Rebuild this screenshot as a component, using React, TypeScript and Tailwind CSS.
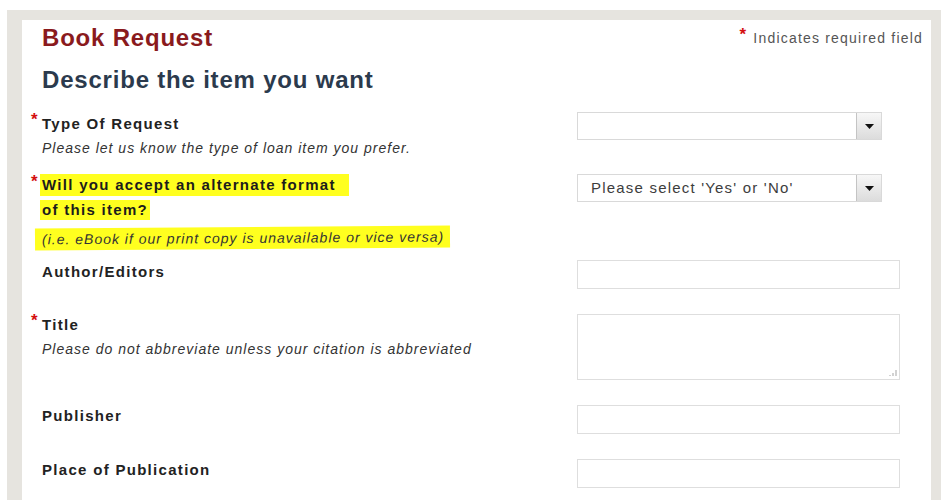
import type { ReactNode } from "react"

const sans = "font-['Liberation_Sans',Arial,sans-serif]"

function Req() {
    // red marker that sits just left of the label, raised like a superscript
    return (
        <span className="relative -top-[4px] -ml-[11px] mr-[3px] inline-block w-[8px] text-[17px] leading-none font-bold text-[#d40f0f]">
            *
        </span>
    )
}

function Label({ children, required }: { children: ReactNode; required?: boolean }) {
    return (
        <div className="text-[15px] leading-[20px] font-bold tracking-[1.3px] text-[#222]">
            {required && <Req />}
            {children}
        </div>
    )
}

function Hint({ children }: { children: ReactNode }) {
    return <div className="mt-[4px] text-[14px] leading-[20px] italic tracking-[1px] text-[#333]">{children}</div>
}

function Select({ value }: { value?: string }) {
    return (
        <div className="flex h-[28px] w-[305px] items-stretch border border-[#d9d9d9] bg-white">
            <div className="flex-1 pl-[13px] text-[15px] leading-[26px] tracking-[1.2px] text-[#3d3d3d]">{value}</div>
            <div className="flex w-[25px] items-center justify-center border-l border-[#c4c4c4] bg-gradient-to-b from-[#f7f7f7] to-[#dcdcdc]">
                <svg width="9" height="5" viewBox="0 0 9 5">
                    <path d="M0 0h9L4.5 5z" fill="#111" />
                </svg>
            </div>
        </div>
    )
}

function TextInput() {
    return <div className="h-[29px] w-[323px] border border-[#dedede] bg-white" />
}

function TextArea() {
    return (
        <div className="relative h-[66px] w-[323px] border border-[#dedede] bg-white">
            {/* resize grip */}
            <svg className="absolute right-[2px] bottom-[2px]" width="8" height="8" viewBox="0 0 8 8">
                <path d="M7 1v6M4 4v3M1 6v1" stroke="#b5b5b5" strokeWidth="1.2" />
            </svg>
        </div>
    )
}

function Row({ label, control, className }: { label: ReactNode; control: ReactNode; className?: string }) {
    return (
        <div className={`flex items-start ${className ?? ""}`}>
            <div className="w-[535px] shrink-0">{label}</div>
            <div>{control}</div>
        </div>
    )
}

export default function App() {
    return (
        <div className={`h-[500px] overflow-hidden bg-white pt-[10px] pl-[7px] ${sans}`}>
            <div className="flex h-full flex-col bg-[#e6e4df] pt-[10px] pr-[10px] pl-[15px]">
                <div className="flex-1 bg-white pt-[4px] pr-[8px] pl-[20px]">
                    {/* heading row */}
                    <div className="flex items-start justify-between">
                        <h1 className="text-[24px] leading-[28px] font-bold tracking-[0.8px] text-[#8a1a1d]">Book Request</h1>
                        <p className="mt-[4px] text-[14px] leading-[20px] tracking-[1.2px] text-[#555]">
                            <span className="relative -top-[3px] mr-[6px] text-[17px] font-bold text-[#d40f0f]">*</span>
                            Indicates required field
                        </p>
                    </div>
                    <h2 className="mt-[13px] text-[24px] leading-[30px] font-bold tracking-[0.8px] text-[#2b3a4d]">
                        Describe the item you want
                    </h2>

                    <Row
                        className="mt-[17px]"
                        label={
                            <div className="pt-[2px]">
                                <Label required>Type Of Request</Label>
                                <Hint>Please let us know the type of loan item you prefer.</Hint>
                            </div>
                        }
                        control={<Select />}
                    />

                    <Row
                        className="mt-[16px]"
                        label={
                            <div className="text-[15px] leading-[24px] font-bold tracking-[1.3px] text-[#1c1c1c]">
                                <div className="flex items-center">
                                    <Req />
                                    <span className="-ml-[2px] inline-block h-[22px] bg-[#ffff1f] pr-[13px] pl-[2px] leading-[22px]">
                                        Will you accept an alternate format
                                    </span>
                                </div>
                                <div className="mt-[2px]">
                                    <span className="-ml-[2px] inline-block h-[20px] bg-[#ffff1f] pr-[2px] pl-[2px] leading-[20px]">
                                        of this item?
                                    </span>
                                </div>
                                <div className="mt-[4px]">
                                    <span className="-ml-[7px] inline-block h-[22px] -rotate-[0.4deg] bg-[#ffff1f] pr-[6px] pl-[7px] text-[14px] leading-[22px] font-normal italic tracking-[1px] text-[#333]">
                                        (i.e. eBook if our print copy is unavailable or vice versa)
                                    </span>
                                </div>
                            </div>
                        }
                        control={<Select value="Please select 'Yes' or 'No'" />}
                    />

                    <Row
                        className="mt-[10px]"
                        label={
                            <div className="pt-[2px]">
                                <Label>Author/Editors</Label>
                            </div>
                        }
                        control={<TextInput />}
                    />

                    <Row
                        className="mt-[25px]"
                        label={
                            <div className="pt-[1px]">
                                <Label required>Title</Label>
                                <Hint>Please do not abbreviate unless your citation is abbreviated</Hint>
                            </div>
                        }
                        control={<TextArea />}
                    />

                    <Row
                        className="mt-[25px]"
                        label={
                            <div className="pt-[1px]">
                                <Label>Publisher</Label>
                            </div>
                        }
                        control={<TextInput />}
                    />

                    <Row
                        className="mt-[25px]"
                        label={
                            <div className="pt-[1px]">
                                <Label>Place of Publication</Label>
                            </div>
                        }
                        control={<TextInput />}
                    />
                </div>
            </div>
        </div>
    )
}
